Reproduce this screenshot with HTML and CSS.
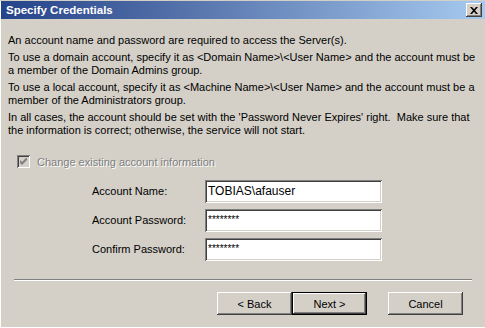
FILE: index.html
```html
<!DOCTYPE html>
<html>
<head>
<meta charset="utf-8">
<link rel="stylesheet" href="styles.css">
</head>
<body>
<div class="window">
  <div class="titlebar">
    <span class="title">Specify Credentials</span>
    <span class="close"><svg width="8" height="7" viewBox="0 0 8 7"><path d="M0 0h2l2 2.2L6 0h2L5 3.5 8 7H6L4 4.8 2 7H0l3-3.5z" fill="#000"/></svg></span>
  </div>
  <div class="content">
    <p class="p1">An account name and password are required to access the Server(s).</p>
    <p>To use a domain account, specify it as &lt;Domain Name&gt;\&lt;User Name&gt; and the account must be a member of the Domain Admins group.</p>
    <p>To use a local account, specify it as &lt;Machine Name&gt;\&lt;User Name&gt; and the account must be a member of the Administrators group.</p>
    <p>In all cases, the account should be set with the 'Password Never Expires' right.&nbsp; Make sure that the information is correct; otherwise, the service will not start.</p>

    <div class="check">
      <span class="box"><svg width="7" height="7" viewBox="0 0 7 7"><path d="M0 2v3l2 2 5-5V-1L2 4z" fill="#808080"/></svg></span>
      <span class="check-label">Change existing account information</span>
    </div>

    <div class="form">
      <label class="lbl">Account Name:</label>
      <div class="field"><span class="val">TOBIAS\afauser</span></div>
      <label class="lbl">Account Password:</label>
      <div class="field"><span class="pw">********</span></div>
      <label class="lbl">Confirm Password:</label>
      <div class="field"><span class="pw">********</span></div>
    </div>
  </div>
  <div class="sep"></div>
  <div class="buttons">
    <div class="btn">&lt; Back</div>
    <div class="btn default"><span>Next &gt;</span></div>
    <div class="btn cancel">Cancel</div>
  </div>
</div>
</body>
</html>
```

FILE: styles.css
```css
html, body {
  margin: 0;
  padding: 0;
}
body {
  width: 485px;
  height: 328px;
  overflow: hidden;
  background: #d4d0c8;
  font-family: "Liberation Sans", Arial, sans-serif;
  font-size: 11px;
  color: #000;
}
.window {
  height: 327px;
  border-left: 1px solid #fff;
  border-bottom: 1px solid #fff;
  box-sizing: border-box;
  background: #d4d0c8;
}
.titlebar {
  height: 18px;
  margin-top: 1px;
  display: flex;
  align-items: center;
  justify-content: space-between;
  background: linear-gradient(to right, #25438a 0%, #5875ad 40%, #a6caf0 100%);
  padding: 0 3px 0 5px;
}
.title {
  color: #fff;
  font-weight: bold;
  font-size: 11.5px;
  font-family: "Liberation Sans", Arial, sans-serif;
}
.close {
  width: 16px;
  height: 14px;
  box-sizing: border-box;
  background: #d4d0c8;
  display: flex;
  align-items: center;
  justify-content: center;
  box-shadow: inset -1px -1px 0 #404040, inset 1px 1px 0 #fff, inset -2px -2px 0 #808080;
}
.content {
  padding: 15px 8px 0 7px;
}
p {
  margin: 4px 0 0;
  line-height: 13px;
}
p.p1 {
  margin-top: 0;
}
.check {
  display: flex;
  align-items: center;
  margin-top: 18px;
  margin-left: 9px;
  height: 13px;
}
.box {
  width: 13px;
  height: 13px;
  box-sizing: border-box;
  background: #d4d0c8;
  box-shadow: inset 1px 1px 0 #808080, inset -1px -1px 0 #fff, inset 2px 2px 0 #404040, inset -2px -2px 0 #d4d0c8;
  display: flex;
  align-items: center;
  justify-content: center;
}
.check-label {
  margin-left: 7px;
  color: #808080;
  text-shadow: 1px 1px 0 #fff;
}
.form {
  margin-top: 12px;
  margin-left: 84px;
  display: grid;
  grid-template-columns: 113px 177px;
  row-gap: 6px;
  align-items: center;
}
.lbl {
  line-height: 13px;
}
.field {
  height: 23px;
  box-sizing: border-box;
  background: #fff;
  box-shadow: inset 1px 1px 0 #808080, inset -1px -1px 0 #fff, inset 2px 2px 0 #404040, inset -2px -2px 0 #d4d0c8;
  padding: 4px 3px 0;
}
.val {
  font-size: 12px;
  line-height: 15px;
}
.pw {
  font-size: 10px;
  line-height: 10px;
}
.sep {
  margin: 18px 13px 0 13px;
  width: 458px;
  border-top: 1px solid #808080;
  border-bottom: 1px solid #fff;
  height: 0;
}
.buttons {
  display: flex;
  margin-top: 11px;
  padding-left: 216px;
}
.btn {
  width: 75px;
  height: 23px;
  box-sizing: border-box;
  display: flex;
  align-items: center;
  justify-content: center;
  background: #d4d0c8;
  box-shadow: inset -1px -1px 0 #404040, inset 1px 1px 0 #fff, inset -2px -2px 0 #808080;
}
.btn.default {
  border: 1px solid #000;
}
.btn.cancel {
  margin-left: 21px;
}
```
